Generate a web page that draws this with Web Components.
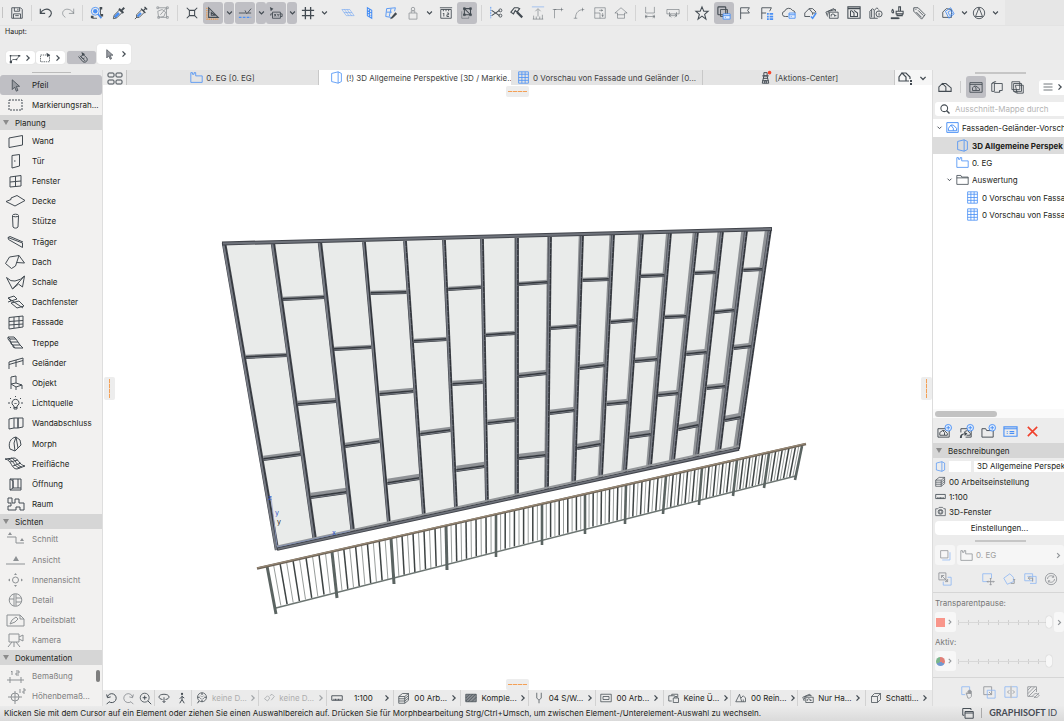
<!DOCTYPE html>
<html lang="de">
<head>
<meta charset="utf-8">
<title>3D Allgemeine Perspektive</title>
<style>
html,body{margin:0;height:100%;overflow:hidden}
body{font:400 8px/12px Inter,"Liberation Sans",sans-serif;color:#1d1e20;background:#ebebeb;
--ink:#434b52;--blue:#4a90f5;--press:#bfbfc4;--line:#d4d4d4}
</style>
</head>
<body>
<cad-app></cad-app>
<script>
const icons={
save:'<path d="M2 2h10l2 2v10H2zM5 2v4h6V2M4 14V9h8v5M9 3v2M6 11h4"/>',
undo:'<path d="M1.500 3v5.500H7M1.500 8.500C4 4 9 2.500 12 4.500s3 6-1 8.500" stroke-width="1.300"/>',
redo:'<path class="l" d="M14.500 3v5.500H9M14.500 8.500C12 4 7 2.500 4 4.500s-3 6 1 8.500"/>',
find:'<circle class="bf" cx="6" cy="6" r="2.500"/><circle class="b" cx="6" cy="6" r="4.500"/><path class="b" d="M9 9l4 5" stroke-width="2"/><path d="M12 3v7M3 12v2h5"/><path class="f" d="M11 1h3v3h-3zM1 11h3v3H1zM12 9h3v3h-3z"/>',
pick:'<path class="b" d="M3 13l5-5" stroke-width="3"/><path d="M1.500 14.500l1-4 6-6 3 3-6 6z"/><path d="M8 3l5 5M11 5l3-3" stroke-width="2.200"/>',
syringe:'<path class="b" d="M4 12l4-4" stroke-width="2.500"/><path d="M1 15l2.500-2.500M3 10l6-6 3 3-6 6H3z"/><path d="M8 3l5 5M11 5l3-3M12 1l3 3" stroke-width="1.500"/>',
transform:'<g class="l"><path d="M3 2h9v11H5M2 6l5-2 4 3-2 5-6 1zM5 10l7-8"/><path d="M1 1h2v2H1zM12 1h2v2h-2zM12 12h2v2h-2zM2 12h2v2H2z"/></g>',
snap:'<path d="M5 5h6v6H5zM2 2l3 3M14 2l-3 3M2 14l3-3M14 14l-3-3" stroke-width="1.200"/>',
triangle:'<path d="M3 2v11h11zM6 7.500v3h4zM3 5h1M3 7h1" stroke-width="1.200"/><path class="o" d="M1 2v13h13" stroke-dasharray="1.500 1" stroke-width="1.300"/>',
guide:'<path d="M1 8h8M8 5l2 4 5-6M11 8h4"/><path class="b" d="M1 13h14" stroke-dasharray="3 1.500" stroke-width="1.300"/>',
xy:'<path d="M4 7h9v7H4zM13 9h2v3h-2M4 9H2v2M6 9l2 3M8 9l-2 3M9.500 9l1 1.500v1.500M12 9l-1.500 1.500" stroke-width="1"/><path class="f" d="M1 1l4 2-3 3z"/>',
grid:'<path d="M5 1v14M11 1v14M1 5h14M1 11h14" stroke-width="1.500"/>',
trace:'<path class="b l" d="M1 4h9l5 7H6zM4 4l5 7M7 4l5 7M3.500 7.500h9"/>',
slab:'<path class="b" d="M5 2l5 3v9l-5-3zM7.500 3.500v9M5 5l5 3M5 8l5 3" stroke-width="1.200"/>',
slabpen:'<path class="b" d="M3 3l10-1-1 4M3 3L2 12l6 1M8 3L6 12M3 7h6"/><path d="M8 13l5-6 2 2-5 5-3 1z" class="f"/>',
man:'<g class="l"><circle cx="8" cy="3.500" r="2"/><path d="M3.500 8h9v7h-9zM6 8V5.500h4V8"/></g>',
ruler12:'<path d="M1 2h14M2 4h12v10H2zM5 4v2M8 4v2M11 4v2M4.500 9l1-1v4M9 8h2v2H9v2h2.500"/>',
group:'<path d="M5 3h7v7H5zM5 3l7 7" stroke-width="1.200"/><path d="M4 2h2v2H4zM11 2h2v2h-2zM4 9h2v2H4zM11 9h2v2h-2z"/><path class="l" d="M2 6v8h8v-2"/>',
scissors:'<path class="b" d="M2 1v13" stroke-dasharray="2 1"/><path d="M3 5l9 6M3 11l9-6" stroke-width="1.200"/><circle cx="13" cy="5" r="1.700"/><circle cx="13" cy="11" r="1.700"/>',
hammer:'<path d="M1 7l4-5h4l2 1-3 4-2-2-2 4z" stroke-width="1.300"/><path d="M8 7l6 6" stroke-width="2.500"/>',
raise:'<path class="b l" d="M1 1h14"/><path class="l" d="M8 12V4M5 6l3-3 3 3M3 15v-4M6 15v-3M10 15v-3M13 15v-5M2 15h12"/>',
corner:'<path class="l" d="M4 14V4h10M2 4h4M12 2v4"/>',
arc:'<path class="l" d="M4 14C4 7 8 4 14 4M2 14h4M12 2v4"/>',
stretch:'<path class="l" d="M2 2h12v12H2zM2 8h6v6M7 5h4M9 4l2 1-2 1M11 8v4M10 10l1 2 1-2"/>',
homeup:'<path class="l" d="M1 8l7-6 7 6h-3v6H4V8zM4 10h8"/>',
dimh:'<path class="l" d="M3 1v7h10V1M3 10v4M13 10v4M3 12h10M5 10.500L3 12l2 1.500M11 10.500l2 1.500-2 1.500"/>',
dimw:'<path class="l" d="M1 4h14v5H1zM4 12V7M12 12V7M4 11h8M6 9l-2 2 2 2M10 9l2 2-2 2"/>',
star:'<path d="M8 1l2 5h5l-4 3.500L12.500 15 8 11.500 3.500 15 5 9.500 1 6h5z" stroke-width="1.200"/>',
layers:'<rect x="1" y="1" width="9" height="9" rx="1" stroke-width="1.300"/><path d="M4 4h8v8H4z"/><path class="bw" d="M7 9h8v6H7zM7 11h8M9 13h1"/>',
flag:'<path d="M3 15V2h10l-2 3 2 3H3"/>',
flaglist:'<path d="M2 15V2h11l-2 4M2 8h5"/><path class="b" d="M8 9h2M11 9h4M8 12h2M11 12h4M8 15h2M11 15h4" stroke-width="2"/>',
cloud:'<path d="M7 12H4a3 3 0 01-1-6 5 5 0 019-1 3.500 3.500 0 013 3"/><path class="bw" d="M8 8h7v6H8zM8 10h7M10 12h1"/>',
cloudcheck:'<path d="M8 12H2V8l5-5 4 5v2M7 3h4l4 4M11 8h4"/><path class="b" d="M9 12l2 2 4-6" stroke-width="1.700"/>',
cards:'<path d="M5 7h10v7H5zM3 12L1 7l9-4 1 2M3 10l1-4 8-2v2M7 12v-2l2-1 2 1v2M11 11h2"/>',
picture:'<path d="M1 1h14v13H1zM1 3h14M5 5l3 3v4h4V8L8 5M4 5v7h8" stroke-width="1.200"/>',
books:'<path d="M1 6l3-3 2 2v9H1zM6 5l3-3 2 2M6 14h4M3 4v9"/><circle cx="11.500" cy="9" r="3.500" class="w"/><path d="M11.500 8v3M11.500 6v1"/>',
paint:'<path d="M10 1h2v5h-2zM7 6h8v3H7zM2 6c1-3 1-3 2 0s-2 2-2 0M8 9v2h6V9M1 14h10" stroke-width="1.200"/><path class="f" d="M1 13h9v2H1z"/>',
tag:'<path d="M2 2h5l8 8-4 5-9-9zM5 7l6 6M7 5l6 6M4 4h1"/>',
bluehouse:'<path d="M2 13V7l4-4 6 1v9z"/><path class="b" d="M5 6l6-4 4 7-6 5zM8 7l3-2 2 4-3 2z"/>',
circlea:'<circle cx="8" cy="8" r="6.500"/><path d="M8 2l4 10H4z"/>',
down:'<path d="M4.500 6.500L8 10l3.500-3.500" stroke-width="1.700"/>',
right:'<path d="M6 4.500L9.500 8 6 11.500" stroke-width="1.700"/>',
cursor:'<path d="M4 1v12l3-3 2 5 2-1-2-5h4z" fill="#9a9da3"/>',
poly:'<path d="M2 13V5h12M5 10h5l4-5M2 13l3-3"/><path class="f" d="M1 12h3v3H1zM1 4h2v2H1zM12 4h3v2h-3zM9 9h2v2H9z"/>',
rectsel:'<path d="M2 4h12v9H2z" stroke-dasharray="2 1"/><path class="f" d="M10 1l5 3-4 3z"/>',
spiral:'<path d="M2 6l6 7c4 2 7-2 5-5s-5-5-7-3 2 5 4 3M4 5l7 7" stroke-width="1.300"/><path class="f" d="M6 0l5 3-4 2z"/>',
tiles:'<rect x="1" y="3" width="6" height="4" rx="1"/><rect x="9" y="3" width="6" height="4" rx="1"/><rect x="1" y="10" width="6" height="4" rx="1"/><rect x="9" y="10" width="6" height="4" rx="1"/>',
plan:'<path class="b" d="M1 2h2v2h2V2h2v4h8v8H1z"/>',
box3d:'<path class="b" d="M2 3l8-2 4 2v10l-4 2-8-2zM10 1v14"/>',
table:'<path class="b" d="M2 1h12v14H2zM2 4h12M2 8h12M2 11.500h12M6 1v14M10 1v14"/>',
tower:'<path d="M6 6h4l2 9H4zM5 9h6M4 12h8M6 6V2h4v4M4 6h8M7 15v-3h2v3" stroke-width="1.200"/><circle cx="13" cy="2" r="2.200" fill="#f8452b" stroke="none"/>',
house:'<path d="M1 13V8l4-4 4 4v5zM5 4h4l6 5v4H9M9 13V8" stroke-width="1.200"/>',
housedots:'<path d="M1 11V7l3-4 4 4v4zM4 3h4l4 4v2M8 11h3" stroke-width="1.200"/><path class="f" d="M12 10h2v2h-2zM12 13h2v2h-2z"/>',
mapview:'<path d="M1 3h14v11H1zM1 5h14M4 12V9l2-2 2 2v3zM6 7h2l4 3v2H8"/>',
layout:'<path d="M2 4v9h3V3zM2 4l3-2h2M5 4h9v8h-3v2H5M11 14v-2"/>',
book:'<path d="M1 2h9v9H1zM3 4h9v9H3zM5 6h9v9H7zM3 13l4 2"/>',
menu:'<path d="M2 4h12M2 8h12M2 12h12"/>',
search:'<circle cx="7" cy="7" r="4.500" stroke-width="1.400"/><path d="M10 10l4 4" stroke-width="1.800"/>',
mapblue:'<path class="b" d="M1 2h14v12H1zM3 12V9l3-4 3 4v3zM6 5h3l4 4v3H9" stroke-width="1.200"/>',
folder:'<path d="M1 3h5l1 2h8v9H1zM1 6h14"/>',
addview:'<path d="M1 5h12v9H1zM3 12V9l3-2 2 2v3zM6 7h2l3 3v2H8"/><circle class="bw" cx="12" cy="4" r="3.500"/><path class="b" d="M10 4h4M12 2v4"/>',
addclone:'<path d="M2 9V5h11v9H7M6 8l3-1 3 3v2H8"/><path class="f" d="M1 15c0-4 2-5 5-5L5 8l4 2-3 3v-2c-2 0-3 1-3 4z"/><circle class="bw" cx="12" cy="4" r="3.500"/><path class="b" d="M10 4h4M12 2v4"/>',
addfolder:'<path d="M1 5h4l1 2h7v7H1z"/><circle class="bw" cx="12" cy="4" r="3.500"/><path class="b" d="M10 4h4M12 2v4"/>',
props:'<path class="b" d="M1 3h14v10H1zM1 5h14M4 8h1M4 10h1M7 8h5M7 10h5" stroke-width="1.200"/>',
cross:'<path d="M3 3l10 10M13 3L3 13" stroke="#f0412c" stroke-width="1.700"/>',
stack:'<path d="M1 6h8l5-4H6zM1 9h8l5-4M1 12h8l5-4M1 15h8l5-4M1 6v9M9 6v9M14 2v9"/>',
scale:'<path d="M1 5h14v6H1zM4 9v2M6 9v2M8 9v2M10 9v2M12 9v2" stroke-width="1.200"/>',
viewcam:'<path d="M1 4h3l2-2h5l2 2h2v10H1z"/><circle cx="8" cy="8.500" r="3.500"/><path d="M6 6.500h4v4H6z"/>',
frame:'<path d="M2 2h9v9H2z"/><path class="b" d="M4 13.500h9.500V4"/>',
swap:'<path d="M1 1h8v8H1zM4 4l7 7M4 7V4h3M11 8v3H8"/><path class="b" d="M11 6h4v9H6v-4"/>',
move:'<path class="b" d="M8 11H2V2h10v5"/><path d="M11 7v8M7 11h8M10 8l1-1 1 1M10 14l1 1 1-1M14 10l1 1-1 1M8 10l-1 1 1 1"/>',
rotate:'<path class="b" d="M2 7l7-5 4 4v5l-7 3z"/><path d="M10 13h4V8M13 9l1-1 1 1"/>',
copy:'<path class="b" d="M2 2h9v8H2zM5 5h10v8H8"/><path d="M6 7h5v4M8 5L6 7l2 2"/>',
refresh:'<circle cx="8" cy="8" r="6.500"/><path d="M4 8c0-4 6-5 7-2M12 8c0 4-6 5-7 2M11 4v2H9M5 12v-2h2"/>',
hand:'<path class="b" d="M6 11H2V2h9v4"/><path d="M7 9l2 1V7h1v3-4h1v4-4h1v4-3h1v6l-2 2H9z"/>',
overlap:'<path d="M2 2h9v9H2z"/><path class="b" d="M6 6h9v9H6z"/><path d="M8 8l3 3"/>',
split:'<path class="b" d="M7 2H1v12h6M9 2h6v12H9"/><path d="M8 1v14M6 6L4 8l2 2M10 6l2 2-2 2"/>',
hatch:'<path d="M2 2h10v6M8 13H2V2M2 6l4-4M2 10l8-8M3 13l9-9M8 12c2-3 5-3 7 0-2 3-5 3-7 0M9 15l6-6"/>',
zoomprev:'<path d="M3 6a5.500 5.500 0 112 6M5 12l-3 3M2 3l1 4 4-1" stroke-width="1.200"/>',
zoomnext:'<path class="l" d="M13 6a5.500 5.500 0 10-2 6M11 12l3 3M14 3l-1 4-4-1" stroke-width="1.200"/>',
zoomin:'<circle cx="7" cy="7" r="5.500"/><path d="M11 11l4 4M4.500 7h5M7 4.500v5" stroke-width="1.200"/>',
orbit:'<path d="M6 10C-1 9 0 3 8 3s9 6 2 7M8 7v7M6 12l2 2 2-2" stroke-width="1.200"/>',
walk:'<circle class="f" cx="8" cy="2.500" r="1.500"/><path d="M8 5v5l-3 5M8 10l3 5M5 9l3-3 3 2" stroke-width="1.300"/>',
fit:'<circle cx="8" cy="7" r="6"/><path d="M4 12l-2 3M8 1v3M8 10v3M2 7h3M11 7h3M6 5l1 1M10 5L9 6M6 9l1-1M10 9L9 8" stroke-width="1.300"/>',
hook:'<path d="M2 9l4-4 3 3-3 4zM9 5l3-2 3 3-4 5"/>',
fill:'<path d="M1 3h14v10H1z" fill="#8a8f94"/><path d="M1 8l5-5M1 12l9-9M4 13L14 3M9 13l6-6"/>',
pen:'<path d="M5 1v7l3 3 3-3V1M8 11v4"/>',
frames:'<path d="M1 3h14v10H1zM4 6h8v4H4z"/>',
lockbox:'<path d="M5 12H1V5h4V3h8v4M7 8h7v6H7zM9 8V6h3v2M5 5h4"/>',
tri:'<path d="M1 13h8L6 3zM9 13h5V8l-3-3-3 3M11 10v3"/>',
clip:'<path d="M5 7h10v7H5zM3 12L1 7l9-4 1 2M3 10l1-4 8-2v2M7 12v-2l2-1 2 1v2M11 11h2"/>',
cube:'<path d="M2 6l4-4h8v8l-4 4H2zM2 6h8v8M10 6l4-4"/>',
windows:'<path d="M1 2h11v2M1 2v9h2M4 6h11v9H4zM4 8h11" stroke-width="1.300"/>'};
const wide={
marquee:'<path d="M4 3h13v10H4z" stroke-dasharray="2 1"/>',
wall:'<path d="M4 5l13.500-2.500V12L4 14.500z"/>',
door:'<path d="M7 2.500l7.500-1V13L7 15zM9 8h1.500"/>',
window:'<path d="M5 4l11-1.500V13L5 14zM10.500 3v10.500M5 9l11-1"/>',
floor:'<path d="M1 8.500l5-2V5l6-2.500 8 5L10 13z"/>',
column:'<ellipse cx="10.500" cy="2.500" rx="3" ry="1.300"/><path d="M7.500 3l.5 11c1 1.500 4 1.500 5 0l.5-11"/>',
beam:'<path d="M3 3.500L17.500 9v4.500L3.500 5.500zM3 3.500l2-1L18 8"/>',
roof:'<path d="M.5 9.500L4.500 3 14 1.500 10.500 12l-4 2.500zM14 1.500L19.500 9l-8-.500"/>',
shell:'<path d="M1.500 3.500Q6 8 10 7q6-1 9.500-5l-2 11-4-3L7.500 15zM7.500 15L19.500 2"/>',
skylight:'<path d="M3 4l6-2 3 3-6 2zM3 4l15 10M9 2l3 3M6 9l8-2 5 5-7 2zM3 8l3-1"/>',
facade:'<path d="M4 3.500L18 2v11L4 15zM9 3v11M14 2.500v11M4 7.500l14-1M4 11l14-1"/>',
stair:'<path d="M3 2h6l2 2H5zM5 4v2l1 1h7l-2-3M6 7v2l2 1h7l-2-3M8 10v2l2 1h8l-3-3M3 2v2l7 9"/>',
rail:'<path d="M4 14V7l14-4v7M4 9.500l14-4M11 5v7"/>',
chair:'<path d="M6 2l5-1v7l-5 1zM6 9v5M6 9l5 3 6-2-6-2M11 12v3M17 10v4"/>',
lamp:'<path d="M9 11a3.500 3.500 0 113 0v3H9zM9 12.500h3M9.500 8l1 1 1-1M10.500 2V1M5 3l1 1M15 4l1-1M3 8h2M16 8h2M5 13l1-1M16 13l-1-1"/>',
wallend:'<path d="M4 4l5-1v10l-5 1zM9 3h4v10H9M13 3h5v9l-5 1z"/>',
morph:'<path d="M11 1C5 2 3 8 5 13l5 2 6-6-1-5zM11 1L9 7l1 8M11 1l2 11"/>',
mesh:'<path d="M0 3l9-1c4 0 5 7 11 8l-8 3C6 13 7 4 0 3M3 3c6 1 6 8 12 9M6 2c5 1 5 8 11 9M5 6l8-2M8 10l8-3"/>',
opening:'<path d="M5 3h11v11H5zM5 3l3 2v7l-3 2M8 12h8M8 3v9M13 3v9"/>',
room:'<path d="M3 2h4v5h3V3h4v4h5v7h-4v-3h-4v3H3v-4h3V7H3z"/>',
section:'<path d="M2 6h9v6h8"/><path class="f" d="M3 4l2-3 2 3zM15 10l2-3 2 3z"/>',
elevation:'<path d="M1 12h19"/><path class="f" d="M8 9l3-5 3 5z"/>',
interior:'<circle cx="10.500" cy="8" r="3"/><path class="f" d="M9 3l1.500-2L12 3zM9 13l1.500 2L12 13zM5 6.500L3 8l2 1.500zM16 6.500L18 8l-2 1.500z"/>',
detail:'<circle cx="10.500" cy="8" r="6.300"/><path d="M9 2v12M11 2v12M4 7h5M11 6h5M11 10h5"/>',
sheet:'<path d="M2 3h13l4 4v7H2zM15 3v4h4M5 12l2-4 4-3 2 2-3 3z"/>',
camera:'<path d="M4 2h10v8H4zM14 5l4-2v6l-4-2M7 10l-4 5M9 10v5M11 10l4 5"/>',
dim:'<path d="M2 12h17M5 9v6M16 9v6M7 3v4M6 4l1-1M11 3h3v2h-3v2h3"/>',
level:'<circle cx="10" cy="9" r="4"/><path d="M3 9h14M10 3v13M15 1v4M18 1h2v2h-2v2h2"/>'};
class View extends HTMLElement{
 constructor(){super();this.attachShadow({mode:'open'})}
 connectedCallback(){this.shadowRoot.innerHTML='<style>*{box-sizing:border-box}button,input{font:inherit;color:inherit;margin:0;border:0;padding:0;background:none;min-width:0}'+this.css()+'</style>'+this.html()}
 a(n,d=''){return this.getAttribute(n)??d}
 css(){return ''} html(){return '<slot></slot>'}
}
const def=(n,css,html)=>customElements.define(n,class extends View{css(){return css} html(){return typeof html==='function'?html(this):html||'<slot></slot>'}});
const ic=(n,s='')=>`<ui-icon name="${n}" ${s?`size="${s}"`:''}></ui-icon>`;

def('ui-icon',`:host{display:block;flex:none;color:var(--ink)}svg{display:block;fill:none;stroke:currentColor;stroke-width:1;overflow:visible}
.b,.bw{stroke:var(--blue)}.bw{fill:#e4eefb}.bf{fill:var(--blue);stroke:none}.f{fill:currentColor;stroke:none}.w{fill:#ebebeb}.o{stroke:#f0953f}.l{opacity:.5}`,
 e=>{const n=e.a('name'),w=wide[n],s=+e.a('size','14');return `<svg aria-hidden="true" width="${w?20:s}" height="${w?16:s}" viewBox="0 0 ${w?20:16} 16">${w||icons[n]||''}</svg>`});

def('tool-button',`:host{display:block;flex:none}button{display:grid;place-items:center;width:20px;height:22px;border-radius:3px}
:host([chev]) button{width:10px}:host([on]) button{background:var(--press)}`,
 e=>`<button type="button" aria-label="${e.a('icon')}">${ic(e.a('icon'),e.hasAttribute('chev')?'11':'14')}</button>`);

def('tool-group',`:host{display:flex;justify-content:space-between;align-items:center;flex:none;width:var(--w);padding:0 4px;border-right:1px solid var(--line);height:16px;box-sizing:border-box}:host([open]){border-color:transparent}`);

const g=(w,list,open)=>`<tool-group style="--w:${w}px" ${open?'open':''}>${list.split(' ').map(t=>{const on=t.startsWith('*');t=t.replace('*','');return t==='v'||t==='V'?`<tool-button chev icon="down" ${t==='V'?'on':''}></tool-button>`:`<tool-button icon="${t}" ${on?'on':''}></tool-button>`}).join('')}</tool-group>`;
def('main-toolbar',`:host{display:flex;align-items:center;height:25px;background:#e6e6e6}div{display:flex;align-items:center;height:25px;background:#ececec;padding-left:2px}div::before{content:"";width:1px;height:11px;background:#c4c4c4}`,
 '<div>'+g(29,'save')+g(51,'undo redo')+g(95,'find pick syringe transform')+g(156,'snap *triangle V *guide V *xy V grid v',1)+g(148,'trace slab slabpen man v ruler12 *group',0)+g(154,'scissors hammer raise corner arc stretch homeup')+g(52,'dimh dimw')+g(246,'star *layers flag flaglist cloud cloudcheck cards picture books paint tag')+g(71,'bluehouse v circlea v',1)+'</div>');

def('info-bar',`:host{display:block;height:45px;padding:0 5px;border-top:1px solid #e3e3e3;font-size:7px;box-sizing:border-box}
p{margin:0}div{display:flex;align-items:flex-end;gap:1px;height:26px;padding-left:1px}
button{display:flex;align-items:center;justify-content:space-between;padding:0 1px 0 3px;width:29px;height:13px;background:#fff;border-radius:3px;box-shadow:0 0 1px #ccc}
.on{background:var(--press);margin-left:1px;justify-content:center}.tall{width:34px;height:20px;padding:0 1px 0 7px}`,
 `<p>Haupt:</p><div><button aria-label="Polygon">${ic('poly','12')}${ic('right','12')}</button><button aria-label="Auswahl">${ic('rectsel','12')}${ic('right','12')}</button><button class="on" aria-label="Magnet">${ic('spiral','12')}</button><button class="tall" aria-label="Pfeil">${ic('cursor','11')}${ic('right','12')}</button></div>`);

def('tool-item',`:host{display:block;flex:1;min-height:20px}button{display:flex;align-items:center;gap:7px;width:100%;height:100%;padding-left:5px;text-align:left;white-space:nowrap}
:host([on]) button{background:var(--press);border-radius:3px}:host([off]) button{color:#808080;--ink:#8d9194}i{display:grid;place-items:center;width:20px}`,
 e=>`<button type="button"><i>${ic(e.a('icon'),'13')}</i><span><slot></slot></span></button>`);
def('section-head',`:host{display:block;flex:none}button{display:flex;align-items:center;gap:6px;width:100%;height:15px;padding-left:3px;background:#d6d6d6;text-align:left}i{border:3px solid transparent;border-top:5px solid #8b8b8b;border-bottom:0}`,
 '<button type="button" aria-expanded="true"><i></i><slot></slot></button>');
const items=[['wall','Wand'],['door','Tür'],['window','Fenster'],['floor','Decke'],['column','Stütze'],['beam','Träger'],['roof','Dach'],['shell','Schale'],['skylight','Dachfenster'],['facade','Fassade'],['stair','Treppe'],['rail','Geländer'],['chair','Objekt'],['lamp','Lichtquelle'],['wallend','Wandabschluss'],['morph','Morph'],['mesh','Freifläche'],['opening','Öffnung'],['room','Raum']];
const views=[['section','Schnitt'],['elevation','Ansicht'],['interior','Innenansicht'],['detail','Detail'],['sheet','Arbeitsblatt'],['camera','Kamera']];
const ti=(l,x='')=>l.map(([i,t])=>`<tool-item icon="${i}" ${x}>${t}</tool-item>`).join('');
def('tool-box',`:host{display:flex;flex-direction:column;position:relative;background:#f2f1f0;border-right:1px solid #dedede}
.grip{flex:none;height:5px;background:#ebebeb}.grip::before{content:"";display:block;width:39px;height:1px;margin:0 auto;background:#bbb;position:relative;top:2px}
.thumb{position:absolute;right:2px;bottom:24px;width:4px;height:12px;border-radius:2px;background:#7e7e7e}`,
 `<div class="grip"></div>${ti([['cursor','Pfeil']],'on')}${ti([['marquee','Markierungsrah...']])}<section-head>Planung</section-head>${ti(items)}<section-head>Sichten</section-head>${ti(views,'off')}<section-head>Dokumentation</section-head>${ti([['dim','Bemaßung'],['level','Höhenbemaß...']],'off')}<div class="thumb"></div>`);

def('view-tab',`:host{display:block;min-width:0}button{display:flex;align-items:center;justify-content:center;gap:3px;width:100%;height:15px;background:#e4e4e4;border-right:1px solid #c8c8c8;white-space:nowrap;color:#3f3f42}:host([on]) button{background:#fff;border:0;padding-left:14px}`,
 e=>`<button type="button" role="tab">${ic(e.a('icon'),'13')}<slot></slot></button>`);
def('tab-bar',`:host{display:grid;grid-template-columns:24px repeat(4,1fr) 37px;height:15px;background:#ececec}button{display:flex;align-items:center;justify-content:center;gap:3px}.a{border-right:1px solid #c4c4c4}.z{background:#f6f6f6}`,
 `<button class="a" aria-label="Übersicht">${ic('tiles','16')}</button><view-tab icon="plan">0. EG [0. EG]</view-tab><view-tab on icon="box3d">(!) 3D Allgemeine Perspektive [3D / Markie...</view-tab><view-tab icon="table">0 Vorschau von Fassade und Geländer [0...</view-tab><view-tab icon="tower">[Aktions-Center]</view-tab><button class="z" aria-label="Ansichten">${ic('housedots','16')}${ic('down','12')}</button>`);

/* Perspective drawing: mullions as [topX, topY, bottomX, bottomY], transoms per bay as [leftY, rightY]. */
const mull=[[224,243,277,550],[273,244,315,541],[320,243,353,533],[364,242,389,524],[405,241,424,517],[444,240,456,509],[482,239,487,503],[517,238,517,497],[550,237,547,490],[582,236,574,484],[613,235,601,478],[642,234,625,472],[670,233,650,467],[697,232,673,462],[722,232,697,457],[746,231,719,453],[770,229,738,449]];
const bays=[[[357,355],[459,454]],[[299,297],[404,401],[497,492]],[[349,347],[446,441]],[[293,292],[394,391],[483,478]],[[341,339],[434,430]],[[289,287],[384,382],[470,466]],[[335,333],[423,420]],[[284,282],[376,373],[458,455]],[[328,326],[413,410]],[[280,279],[368,365],[448,444]],[[322,320],[404,402]],[[276,275],[361,359],[437,434]],[[317,316],[395,393]],[[273,272],[354,352],[429,425]],[[312,310],[388,386]],[[270,269],[348,346],[420,417]]];
const posts=[[267,566,276,614],[332,552,337,598],[391,538,394,584],[446,526,447,570],[496,515,496,557],[542,504,542,545],[585,494,585,534],[626,485,625,524],[666,476,663,514],[702,468,699,505],[737,460,733,496],[769,453,764,488],[802,446,795,480]];
function scene(){
 const ln=(a,b,c,d,s,w,x='')=>`<path d="M${a.toFixed(1)} ${b.toFixed(1)}L${c.toFixed(1)} ${d.toFixed(1)}" stroke="${s}" stroke-width="${w}" ${x}/>`;
 const at=(m,y)=>m[0]+(m[2]-m[0])*(y-m[1])/(m[3]-m[1]);
 let o='<path d="M222 242L772 228L739 450L277 551Z" fill="#e9ebea"/>';
 mull.forEach((m,i)=>{if(i>6){const w=(i-6)*.25+1;o+=ln(m[0]-1.500-w/2,m[1],m[2]-1.500-w/2,m[3],'#8f9296',w)}});
 bays.forEach((b,i)=>b.forEach(([l,r],k)=>{const x=at(mull[i],l)+2,z=at(mull[i+1],r)-2,u=k;
  o+=ln(x,l-1.500-u/2,z,r-1.500-u/2,'#8f9296',1.500+u)+ln(x,l+.5,z,r+.5,'#34383e',3)+ln(x,l+1,z,r+1,'#777b83',1)}));
 mull.forEach((m,i)=>{o+=ln(...m,'#42454c',i<3?4.400:3.800)+ln(m[0]-.4,m[1],m[2]-.4,m[3],'#777b84',i<3?2.600:1.800)+ln(m[0]+.8,m[1],m[2]+.8,m[3],'#25282d',.8,i>3?'stroke-dasharray="5 1"':'')});
 o+=ln(222,243.500,772,229,'#42454c',4)+ln(223,243.500,771,229,'#6f737b',2)+ln(277,546.500,739,446,'#94979a',2)+ln(277,549,739,449,'#42454c',3.500)+ln(278,549,738,449,'#6f737b',1.500);
 for(let i=0;i<posts.length-1;i++){const p=posts[i],q=posts[i+1];for(let k=1;k<10;k++){const t=k/10,f=p.map((v,j)=>v+(q[j]-v)*t);const s=.86;o+=ln(f[0],f[1],f[0]+(f[2]-f[0])*s,f[1]+(f[3]-f[1])*s,k%2?'#8b918f':'#3d4343',k%2?.9:1.500)}}
 const foot=p=>[p[0]+(p[2]-p[0])*.88,p[1]+(p[3]-p[1])*.88];
 o+=ln(...foot(posts[0]),...foot(posts[12]),'#6c7572',1.500);
 posts.forEach((p,i)=>o+=ln(...p,'#5b6462',i<4?3:2.600));
 o+=ln(257,568.500,806,444,'#6b6257',2.400)+ln(257,568,806,443.500,'#9a8a76',1.200);
 o+=ln(277,547,350,531,'#8593b5',1)+ln(271,497,277,546,'#98a6d0',.8);
 return o+'<g font-family="Inter" font-size="7" fill="#2d55c8"><text x="268" y="500">z</text><text x="275" y="515">y</text><text x="332" y="535">x</text></g><text x="277" y="524" font-family="Inter" font-size="7" fill="#222">y</text>'}
def('model-view',`:host{display:block;position:relative;background:#fff;min-height:0;overflow:hidden}svg{display:block;width:100%;height:100%}
i{position:absolute;background:#ededed;border-radius:2px}.t,.b{left:50%;margin-left:-12px;width:23px;height:11px}.t{top:1px}.b{bottom:0}.l,.r{top:50%;margin-top:-11px;width:11px;height:23px}.l{left:1px}.r{right:0}
i::before{content:"";position:absolute;inset:5px 2px auto;height:1px;background:repeating-linear-gradient(90deg,#f3a056 0 4px,#f8d3b3 4px 5px)}.l::before,.r::before{inset:2px auto 2px 5px;width:1px;height:auto;background:repeating-linear-gradient(#f3a056 0 4px,#f8d3b3 4px 5px)}`,
 ()=>`<svg viewBox="103 85 829 605" fill="none" role="img" aria-label="Fassade und Geländer">${scene()}</svg><i class="t"></i><i class="b"></i><i class="l"></i><i class="r"></i>`);

def('quick-option',`:host{display:block;flex:1;min-width:0}button{display:grid;grid-template-columns:20px 1fr 13px;align-items:center;justify-items:center;width:100%;height:16px;border-left:1px solid #d2d2d2;white-space:nowrap}:host([off]) button{color:#adadad;}:host([off]){--ink:#a0a4a7}:host([off][icon=fit]) ui-icon:first-child{--ink:#434b52}`,
 e=>`<button type="button">${ic(e.a('icon'),'12')}<span><slot></slot></span>${ic('right','12')}</button>`);
def('quick-bar',`:host{display:flex;height:16px;background:#ebebeb}div{display:flex;align-items:center;justify-content:space-around;flex:none}.a{width:51px}.c{width:37px;border-left:1px solid #d2d2d2}button{display:block}`,
 `<div class="a">${['zoomprev','zoomnext','zoomin'].map(n=>`<button aria-label="${n}">${ic(n,'13')}</button>`).join('')}</div><div class="c">${['orbit','walk'].map(n=>`<button aria-label="${n}">${ic(n,'12')}</button>`).join('')}</div>`+
 [['fit','keine D...',1],['hook','keine D...',1],['scale','1:100'],['stack','00 Arb...'],['fill','Komple...'],['pen','04 S/W...'],['frames','00 Arb...'],['lockbox','Keine Ü...'],['tri','00 Rein...'],['clip','Nur Ha...'],['cube','Schatti...']].map(([i,t,o])=>`<quick-option icon="${i}" ${o?'off':''}>${t}</quick-option>`).join(''));

def('tree-row',`:host{display:flex;align-items:center;gap:3px;height:17px;padding-left:calc(2px + var(--d,0)*10px);white-space:nowrap;margin-bottom:var(--g,0)}:host([on]){background:#dcdcdc;font-weight:700}i{width:8px;flex:none}`,
 e=>`<i>${e.hasAttribute('open')?ic('down','9'):''}</i>${ic(e.a('icon'),'13')}<slot></slot>`);
def('opacity-row',`:host{display:flex;align-items:center;gap:2px;height:20px}button{display:flex;align-items:center;justify-content:center;width:21px;height:20px;border-radius:3px;background:#f7f7f7;flex:none}.e,span{width:10px}
b{width:9px;height:9px;background:var(--chip);border-radius:var(--rad,0)}label{flex:1;min-width:0;display:flex}input{-webkit-appearance:none;appearance:none;width:100%;height:12px;background:linear-gradient(#d8d8d8,#d8d8d8) 0 50%/100% 1px no-repeat,repeating-linear-gradient(90deg,#cfcfcf 0 1px,transparent 1px 10px) 0 50%/100% 5px no-repeat}
input::-webkit-slider-thumb{-webkit-appearance:none;width:6px;height:12px;border-radius:3px;background:#f8f8f8;box-shadow:0 0 1px #aaa}`,
 e=>`<button type="button" aria-label="Farbe"><b></b>${ic('right','10')}</button><label><input type="range" value="100" aria-label="${e.a('label')}"></label>${e.hasAttribute('more')?`<button class="e" type="button" aria-label="Mehr">${ic('right','11')}</button>`:'<span></span>'}`);

const ib=(n,s='14')=>`<button type="button" aria-label="${n}">${ic(n,s)}</button>`;
def('navigator-panel',`:host{display:flex;flex-direction:column;min-width:0;overflow:hidden;background:#ececec;border-left:1px solid #dcdcdc}
.grip{height:5px;flex:none}.grip::before{content:"";display:block;width:51px;height:2px;margin:0 auto;background:#c6c6c6;position:relative;left:2px;top:2px}
.modes{display:flex;align-items:center;gap:1px;height:24px;padding-left:2px;flex:none}.modes button,.modes tool-button{flex:none}.modes hr{width:1px;height:12px;border:0;margin:0 4px;background:#ccc}
.modes .m{display:flex;align-items:center;justify-content:center;width:30px;height:15px;margin-left:10px;background:#fff;border-radius:3px;margin-right:-6px}
.search{display:flex;align-items:center;gap:4px;height:14px;margin:3px 0 3px 2px;padding-left:4px;background:#fff;border-radius:3px 0 0 3px;flex:none}.search input{width:100%;outline:0}.search input::placeholder{color:#b4b4b4;opacity:1}
.tree{flex:1;min-height:106px;background:#fff}
.scroll{height:9px;margin-bottom:4px;background:#fafafa;flex:none;padding:2px 2px 0}.scroll::before{content:"";display:block;width:62px;height:6px;border-radius:3px;background:#c2c2c2}
.acts,.ops,.end{display:flex;align-items:center;flex:none}.acts{height:18px;margin-bottom:3px;gap:7px;padding-left:4px}
.row{display:flex;align-items:center;gap:3px;height:15px;padding-left:2px;flex:none;white-space:nowrap}.row.n{height:16px}.row input{height:11px;background:#fff}.row .s{width:22px;flex:none}.row .l{flex:1;padding-left:3px}
.set{height:14px;margin:2px 0 3px 2px;background:#fff;border-radius:4px 0 0 4px;flex:none}
.grip.m{height:7px}
.src{display:flex;gap:2px;height:20px;padding-left:2px;flex:none;color:#a0a0a0}.src button{display:flex;align-items:center;background:#f6f6f6;border-radius:3px;height:20px}.src .q{width:20px;justify-content:center}.src .w{flex:1;gap:3px;padding-left:3px}.src .w span{flex:1;text-align:left}
.plain{--blue:#92969a}
.soft{--ink:#92969a;--blue:#94baf3}
.ops{height:28px;padding-left:5px;gap:7px;border-bottom:1px solid #d6d6d6}.ops button:first-child{margin-right:22px}
p{margin:4px 0 3px 2px;color:#777;flex:none}opacity-row{margin-left:2px;flex:none}
.end{height:29px;gap:8px;padding-left:27px;border-top:1px solid #d6d6d6;margin-top:6px}`,
 `<div class="grip"></div><div class="modes"><tool-button icon="house"></tool-button><hr><tool-button icon="mapview" on></tool-button><tool-button icon="layout"></tool-button><tool-button icon="book"></tool-button><button class="m" aria-label="Menü">${ic('menu','12')}${ic('right','12')}</button></div>
<label class="search">${ic('search','12')}<input type="search" aria-label="Suche" placeholder="Ausschnitt-Mappe durch"></label>
<div class="tree"><tree-row open icon="mapblue" style="--g:1px">Fassaden-Geländer-Vorsch</tree-row><tree-row on icon="box3d" style="--d:1">3D Allgemeine Perspek</tree-row><tree-row icon="plan" style="--d:1">0. EG</tree-row><tree-row open icon="folder" style="--d:1;--g:1px">Auswertung</tree-row><tree-row icon="table" style="--d:2">0 Vorschau von Fassa</tree-row><tree-row icon="table" style="--d:2">0 Vorschau von Fassa</tree-row></div>
<div class="scroll"></div><div class="acts">${['addview','addclone','addfolder','props','cross'].map(n=>ib(n,'15')).join('')}</div>
<section-head>Beschreibungen</section-head>
<div class="row n">${ic('box3d','11')}<input class="s" aria-label="ID"><input class="l" aria-label="Name" value="3D Allgemeine Perspek"></div>
<div class="row">${ic('stack','11')}00 Arbeitseinstellung</div><div class="row">${ic('scale','11')}1:100</div><div class="row">${ic('viewcam','11')}3D-Fenster</div>
<button class="set" type="button">Einstellungen...</button><div class="grip m"></div>
<div class="src soft"><button class="q" aria-label="Referenz">${ic('frame','13')}</button><button class="w"><span class="plain" style="flex:none">${ic('plan','13')}</span><span>0. EG</span>${ic('right','11')}</button></div>
<div class="ops soft">${['swap','move','rotate','copy','refresh'].map(n=>ib(n)).join('')}</div>
<p>Transparentpause:</p><opacity-row class="soft" more label="Transparentpause" style="--chip:#f9968b"></opacity-row><p>Aktiv:</p><opacity-row class="soft" label="Aktiv" style="--chip:conic-gradient(#df8078 0 120deg,#7298cf 120deg 240deg,#7bb58c 240deg);--rad:50%"></opacity-row>
<div class="end soft">${['hand','overlap','split','hatch'].map(n=>ib(n)).join('')}</div>`);

def('status-bar',`:host{display:flex;align-items:center;height:15px;padding:0 7px 2px 4px;box-sizing:border-box;background:linear-gradient(#ebebeb,#dadada);white-space:nowrap}span{flex:1}i{width:1px;height:10px;background:#aaa;margin:0 7px}b{font:700 9px/12px Lato,sans-serif;color:#454b54}b em{font-style:normal;font-weight:400}`,
 `<span>Klicken Sie mit dem Cursor auf ein Element oder ziehen Sie einen Auswahlbereich auf. Drücken Sie für Morphbearbeitung Strg/Ctrl+Umsch, um zwischen Element-/Unterelement-Auswahl zu wechseln.</span>${ic('windows','12')}<i></i><b>GRAPHISOFT <em>ID</em></b>`);

def('cad-app',`:host{display:grid;grid-template:auto auto minmax(0,1fr) auto/minmax(0,1fr);height:100vh}main{display:grid;grid-template-columns:103px minmax(0,1fr) 132px;min-height:0}section{display:grid;grid-template:auto minmax(0,1fr) auto/minmax(0,1fr);min-width:0;min-height:0}`,
 '<main-toolbar></main-toolbar><info-bar></info-bar><main><tool-box></tool-box><section><tab-bar></tab-bar><model-view></model-view><quick-bar></quick-bar></section><navigator-panel></navigator-panel></main><status-bar></status-bar>');
</script>
</body>
</html>
